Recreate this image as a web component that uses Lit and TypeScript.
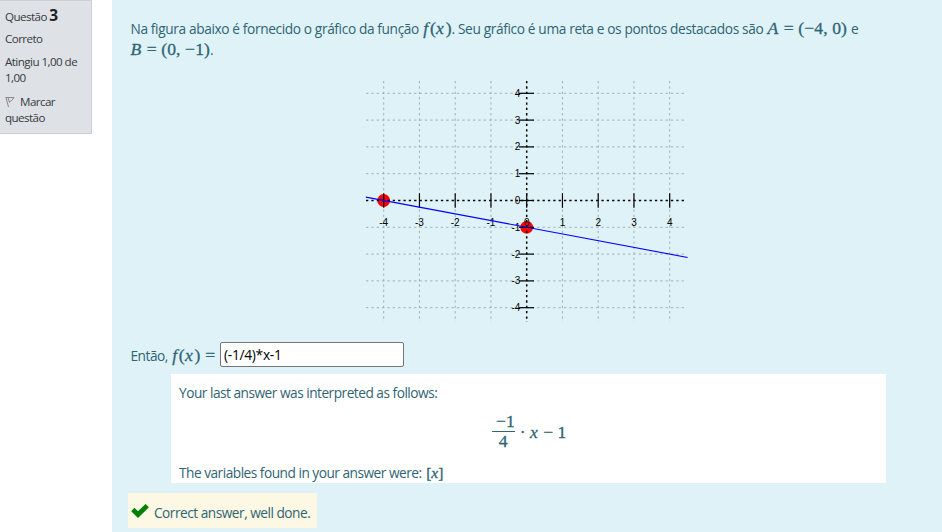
import { LitElement, html, svg, css } from "lit";
import { customElement } from "lit/decorators.js";

const UNITS = [-4, -3, -2, -1, 0, 1, 2, 3, 4];
const px = (x: number) => 160.7 + x * 35.75;
const py = (y: number) => 119.5 - y * 26.8;

@customElement("function-plot")
class FunctionPlot extends LitElement {
  static styles = css`
    :host { display: block; width: 322px; height: 241px; }
    svg { display: block; overflow: visible; }
    .grid { stroke: #a3acb3; stroke-width: 1; stroke-dasharray: 2.3 3.05; }
    .axis { stroke: #000; stroke-width: 1.5; stroke-dasharray: 2.3 3.05; }
    .tick { stroke: #000; stroke-width: 1.2; }
    .line { stroke: #00f; stroke-width: 1.1; }
    .point { fill: #f00; }
    text { font: 10px "Liberation Sans", Arial, sans-serif; fill: #000; }
  `;
  render() {
    return html`<svg width="322" height="241" viewBox="0 0 322 241">
      ${UNITS.filter((n) => n !== 0).map((n) => svg`
        <line class="grid" x1=${px(n)} x2=${px(n)} y1="0" y2="241"/>
        <line class="grid" x1="0" x2="321" y1=${py(n)} y2=${py(n)}/>`)}
      <circle class="point" cx=${px(-4)} cy=${py(0)} r="6.4"/>
      <circle class="point" cx=${px(0)} cy=${py(-1)} r="6.4"/>
      <line class="axis" x1="0" x2="321" y1=${py(0)} y2=${py(0)}/>
      <line class="axis" x1=${px(0)} x2=${px(0)} y1="0" y2="241"/>
      ${UNITS.map((n) => svg`
        <line class="tick" x1=${px(n)} x2=${px(n)} y1="112.2" y2="126.8"/>
        <line class="tick" x1="153" x2="168" y1=${py(n)} y2=${py(n)}/>
        <text x=${px(n)} y="145" text-anchor="middle">${n}</text>
        <text x="154.3" y=${py(n) + 3.5} text-anchor="end">${n}</text>`)}
      <line class="line" x1=${px(-4.5)} y1=${py(0.125)} x2=${px(4.5)} y2=${py(-2.125)}/>
    </svg>`;
  }
}

@customElement("app-root")
class AppRoot extends LitElement {
  static styles = css`
    :host {
      display: flex; align-items: flex-start; width: 942px; height: 532px; overflow: hidden;
      background: #fff; color: #2f6473;
      font: 13.7px/20px "Open Sans", "Noto Sans", sans-serif;
    }
    * { box-sizing: border-box; }
    .info {
      width: 93px; height: 134px; margin-left: -1px; padding: 6px 0 0 5px;
      background: #dee2e6; border: 1px solid #cad0d7; color: #373a3c;
      font-size: 11.6px; line-height: 16px; letter-spacing: -0.55px;
    }
    .info div { margin-bottom: 7px; }
    .info .flag { margin-top: 8px; }
    .info .no { height: 20px; line-height: 20px; margin-bottom: 4px; }
    .info .no b { font-size: 15.5px; line-height: 16px; color: #1d2125; }
    .info svg { display: inline-block; vertical-align: -2px; margin-right: 5px; }
    .content { width: 830px; height: 532px; margin-left: 20px; padding: 18px 16px 0 18.5px; background: #def2f8; }
    .row { display: flex; align-items: baseline; height: 21px; line-height: 21px; white-space: pre; }
    .t { letter-spacing: -0.5px; flex: none; }
    .q1 { letter-spacing: -0.37px; margin-right: 1px; }
    .q2 { letter-spacing: -0.36px; margin-right: 1px; }
    .m { font: 17.6px/20px "Liberation Serif", serif; flex: none; -webkit-text-stroke: 0.3px; }
    .m i { letter-spacing: 1px; }
    .fx i { letter-spacing: 2px; }
    .a { letter-spacing: 0.1px; margin-right: 1px; }
    .b { letter-spacing: 0.1px; }
    .vars { font-size: 15.5px; margin-left: 1.5px; }
    .vars i { letter-spacing: 0; }
    function-plot { margin: 21px 0 0 235.5px; }
    .answer { display: flex; align-items: center; height: 26px; margin-top: 19px; white-space: pre; }
    .answer .row { width: 89.5px; height: 22px; align-self: flex-end; }
    .answer .m { letter-spacing: 0.3px; margin-left: 1.5px; }
    .answer .m i { letter-spacing: 1.6px; }
    input {
      width: 184px; height: 25px; padding: 1px 3px; border: 1px solid #767676; border-radius: 2px;
      background: #fff; color: #000; font: 13.8px "Open Sans", sans-serif; letter-spacing: -0.3px; outline: none;
    }
    .interp { width: 715px; height: 109px; margin: 7px 0 0 40.5px; padding: 7.5px 8px 0; background: #fff; }
    .formula { display: flex; align-items: center; justify-content: center; height: 44px; margin: 7.5px 0 8px; padding-left: 1px; white-space: pre; }
    .frac { display: flex; flex-direction: column; align-items: center; width: 23px; margin-right: 5px; }
    .frac .m { line-height: 19px; height: 20px; }
    .frac .top { border-bottom: 1px solid #2f6473; width: 23px; text-align: right; }
    .ok { display: flex; align-items: center; width: 189px; height: 35px; margin: 10px 0 0 -2.5px; padding: 5px 0 0 3px; background: #fcf8e3; white-space: pre; }
    .ok svg { margin: -4px 5px 0 0; flex: none; }
  `;
  render() {
    return html`
      <aside class="info">
        <div class="no">Questão <b>3</b></div>
        <div>Correto</div>
        <div>Atingiu 1,00 de<br />1,00</div>
        <div class="flag"><svg width="10" height="12" viewBox="0 0 10 12" fill="none" stroke="#888"><path d="M.5 1.5H9L6.5 4.7 4 6.2M1 1.5l2.5 9.5M3 1.5l1.5 5"/></svg>Marcar<br />questão</div>
      </aside>
      <main class="content">
        <div class="row"><span class="t q1">Na figura abaixo é fornecido o gráfico da função </span><span class="m fx"><i>f</i>(<i>x</i>)</span><span class="t q2">. Seu gráfico é uma reta e os pontos destacados são </span><span class="m a"><i>A</i> = (−4, 0)</span><span class="t"> e</span></div>
        <div class="row"><span class="m b"><i>B</i> = (0, −1)</span><span class="t">.</span></div>
        <function-plot></function-plot>
        <div class="answer">
          <div class="row"><span class="t">Então, </span><span class="m"><i>f</i>(<i>x</i>) =</span></div>
          <input type="text" .value=${"(-1/4)*x-1"} />
        </div>
        <section class="interp">
          <div class="row"><span class="t">Your last answer was interpreted as follows:</span></div>
          <div class="formula"><span class="frac"><span class="m top">−1</span><span class="m">4</span></span><span class="m">· <i>x</i> − 1</span></div>
          <div class="row"><span class="t">The variables found in your answer were: </span><span class="m vars">[<i>x</i>]</span></div>
        </section>
        <div class="ok">
          <svg width="18" height="14" viewBox="0 0 18 14"><path fill="#008000" d="M.2 7.2 3.4 3.8 7 7.2 14.5.1 17.9 3.3 7 14z"/></svg><span class="t">Correct answer, well done.</span>
        </div>
      </main>`;
  }
}
